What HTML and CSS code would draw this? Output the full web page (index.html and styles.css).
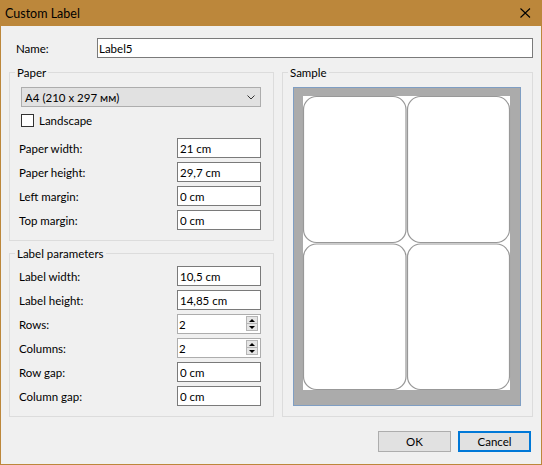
FILE: index.html
```html
<!DOCTYPE html>
<html lang="en">
<head>
    <meta charset="UTF-8">
    <title>Custom Label</title>
    <link rel="stylesheet" href="styles.css">
</head>
<body>
    <div class="dialog">
        <div class="titlebar">
            <span class="title">Custom Label</span>
            <svg class="close" width="11" height="10" viewBox="0 0 11 10">
                <path d="M0.5 0.5 L10 9.5 M10 0.5 L0.5 9.5" stroke="#000" stroke-width="1.1" fill="none"/>
            </svg>
        </div>

        <div class="content">
            <div class="name-row">
                <label class="name-label">Name:</label>
                <input class="field name-field" type="text" value="Label5">
            </div>

            <div class="columns">
                <div class="left-col">
                    <fieldset class="group">
                        <legend>Paper</legend>
                        <div class="group-body paper-body">
                            <div class="combo">
                                <span>A4 (210 x 297 мм)</span>
                                <svg width="8" height="5" viewBox="0 0 8 5">
                                    <path d="M0.5 0.5 L4 4 L7.5 0.5" stroke="#333" stroke-width="1" fill="none"/>
                                </svg>
                            </div>
                            <label class="check"><span class="box"></span>Landscape</label>
                            <div class="rows">
                                <div class="row"><span>Paper width:</span><input class="field" type="text" value="21 cm"></div>
                                <div class="row"><span>Paper height:</span><input class="field" type="text" value="29,7 cm"></div>
                                <div class="row"><span>Left margin:</span><input class="field" type="text" value="0 cm"></div>
                                <div class="row"><span>Top margin:</span><input class="field" type="text" value="0 cm"></div>
                            </div>
                        </div>
                    </fieldset>

                    <fieldset class="group">
                        <legend>Label parameters</legend>
                        <div class="group-body label-body">
                            <div class="rows">
                                <div class="row"><span>Label width:</span><input class="field" type="text" value="10,5 cm"></div>
                                <div class="row"><span>Label height:</span><input class="field" type="text" value="14,85 cm"></div>
                                <div class="row">
                                    <span>Rows:</span>
                                    <div class="spin">
                                        <input type="text" value="2">
                                        <div class="spin-buttons">
                                            <span class="spin-btn up"></span>
                                            <span class="spin-btn down"></span>
                                        </div>
                                    </div>
                                </div>
                                <div class="row">
                                    <span>Columns:</span>
                                    <div class="spin">
                                        <input type="text" value="2">
                                        <div class="spin-buttons">
                                            <span class="spin-btn up"></span>
                                            <span class="spin-btn down"></span>
                                        </div>
                                    </div>
                                </div>
                                <div class="row"><span>Row gap:</span><input class="field" type="text" value="0 cm"></div>
                                <div class="row"><span>Column gap:</span><input class="field" type="text" value="0 cm"></div>
                            </div>
                        </div>
                    </fieldset>
                </div>

                <fieldset class="group sample">
                    <legend>Sample</legend>
                    <div class="group-body sample-body">
                        <svg class="preview" width="228" height="319" viewBox="0 0 228 319">
                            <rect x="0.5" y="0.5" width="227" height="318" fill="#ababab" stroke="#7f9ec3"/>
                            <rect x="10" y="9" width="207" height="294" fill="#fff"/>
                            <g fill="#fff" stroke="#989898" stroke-width="1.2">
                                <rect x="10.5" y="9.5" width="102.5" height="146" rx="13"/>
                                <rect x="114.5" y="9.5" width="102" height="146" rx="13"/>
                                <rect x="10.5" y="157" width="102.5" height="145.5" rx="13"/>
                                <rect x="114.5" y="157" width="102" height="145.5" rx="13"/>
                            </g>
                        </svg>
                    </div>
                </fieldset>
            </div>

            <div class="buttons">
                <button class="btn">OK</button>
                <button class="btn default">Cancel</button>
            </div>
        </div>
    </div>
</body>
</html>
```

FILE: styles.css
```css
* {
    margin: 0;
    padding: 0;
    box-sizing: border-box;
}

body {
    font-family: Lato, "Noto Sans", sans-serif;
    font-size: 11.5px;
    color: #000;
    background: #f0f0f0;
}

.dialog {
    width: 542px;
    height: 465px;
    display: flex;
    flex-direction: column;
    background: #bc873b;
    padding: 0 1px 1px;
}

.titlebar {
    height: 26px;
    display: flex;
    align-items: center;
    justify-content: space-between;
    padding: 0 10px 0 4px;
}

.title {
    font-size: 12.5px;
}

.close {
    display: block;
}

.content {
    flex: 1;
    display: flex;
    flex-direction: column;
    background: #f0f0f0;
    padding: 12px 8px 0 8px;
}

.name-row {
    display: flex;
    align-items: center;
    height: 20px;
}

.name-label {
    width: 81px;
    margin-left: 7px;
}

.field {
    height: 20px;
    width: 84px;
    border: 1px solid #7a7a7a;
    background: #fff;
    padding: 0 2px;
    font: inherit;
    color: #000;
    outline: none;
}

.name-field {
    flex: 1;
    padding-left: 1px;
}

.columns {
    display: flex;
    gap: 8px;
    margin-top: 6px;
}

.left-col {
    width: 265px;
    display: flex;
    flex-direction: column;
    gap: 4px;
}

.group {
    border: 1px solid #dcdcdc;
    min-width: 0;
}

.group legend {
    margin-left: 5px;
    padding: 0 2px;
    line-height: 17px;
}

.paper-body {
    padding: 6px 12px 10px 9px;
}

.label-body {
    padding: 4px 12px 10px 9px;
}

.sample {
    flex: 1;
}

.sample-body {
    padding: 6px 11px 10px 10px;
}

.preview {
    display: block;
}

.combo {
    width: 240px;
    height: 20px;
    margin-left: 2px;
    display: flex;
    align-items: center;
    justify-content: space-between;
    border: 1px solid #adadad;
    background: #e1e1e1;
    padding: 0 5px 0 3px;
}

.check {
    display: flex;
    align-items: center;
    gap: 5px;
    height: 13px;
    margin: 7px 0 0 2px;
}

.box {
    width: 13px;
    height: 13px;
    border: 1px solid #333;
    background: #fff;
}

.paper-body .rows {
    margin-top: 11px;
}

.rows {
    display: flex;
    flex-direction: column;
    gap: 4px;
}

.row {
    display: flex;
    align-items: center;
    justify-content: space-between;
    height: 20px;
}

.spin {
    width: 84px;
    height: 20px;
    display: flex;
    border: 1px solid #adadad;
    background: #fff;
}

.spin input {
    flex: 1;
    min-width: 0;
    border: none;
    outline: none;
    font: inherit;
    padding: 0 2px 0 1px;
    background: transparent;
}

.spin-buttons {
    width: 12px;
    margin: 1px 2px 2px 0;
    display: flex;
    flex-direction: column;
}

.spin-btn {
    flex: 1;
    display: flex;
    align-items: center;
    justify-content: center;
    background: #e5e5e5;
    border: 1px solid #b5b5b5;
}

.spin-btn.down {
    border-top: none;
}

.spin-btn::after {
    content: "";
    border-left: 3px solid transparent;
    border-right: 3px solid transparent;
}

.spin-btn.up::after {
    border-bottom: 3px solid #000;
}

.spin-btn.down::after {
    border-top: 3px solid #000;
}

.buttons {
    display: flex;
    justify-content: flex-end;
    gap: 7px;
    margin-top: 14px;
    padding-right: 2px;
}

.btn {
    width: 73px;
    height: 21px;
    font: inherit;
    color: #000;
    background: #e1e1e1;
    border: 1px solid #adadad;
}

.btn.default {
    border: 2px solid #0078d7;
}
```
